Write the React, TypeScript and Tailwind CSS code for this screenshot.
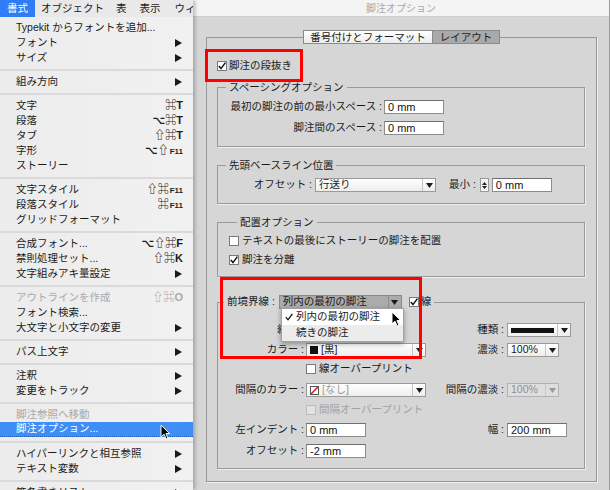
import React from 'react';

type Item = { label: string; sc?: string; fk?: string; sub?: boolean; dis?: boolean; hi?: boolean } | 'sep';

const items: Item[] = [
  { label: 'Typekit からフォントを追加...' },
  { label: 'フォント', sub: true },
  { label: 'サイズ', sub: true },
  'sep',
  { label: '組み方向', sub: true },
  'sep',
  { label: '文字', sc: '⌘T' },
  { label: '段落', sc: '⌥⌘T' },
  { label: 'タブ', sc: '⇧⌘T' },
  { label: '字形', sc: '⌥⇧', fk: 'F11' },
  { label: 'ストーリー' },
  'sep',
  { label: '文字スタイル', sc: '⇧⌘', fk: 'F11' },
  { label: '段落スタイル', sc: '⌘', fk: 'F11' },
  { label: 'グリッドフォーマット' },
  'sep',
  { label: '合成フォント...', sc: '⌥⇧⌘F' },
  { label: '禁則処理セット...', sc: '⇧⌘K' },
  { label: '文字組みアキ量設定', sub: true },
  'sep',
  { label: 'アウトラインを作成', sc: '⇧⌘O', dis: true },
  { label: 'フォント検索...' },
  { label: '大文字と小文字の変更', sub: true },
  'sep',
  { label: 'パス上文字', sub: true },
  'sep',
  { label: '注釈', sub: true },
  { label: '変更をトラック', sub: true },
  'sep',
  { label: '脚注参照へ移動', dis: true },
  { label: '脚注オプション...', hi: true },
  'sep',
  { label: 'ハイパーリンクと相互参照', sub: true },
  { label: 'テキスト変数', sub: true },
  'sep',
  { label: '箇条書きリスト', sub: true },
];

function Arrow({ white }: { white?: boolean }) {
  return (
    <svg width="7" height="8" viewBox="0 0 7 8">
      <path d="M0 0 L7 4 L0 8 Z" fill={white ? '#fff' : '#1a1a1a'} />
    </svg>
  );
}

function Cursor() {
  return (
    <svg width="11" height="16" viewBox="0 0 11 16">
      <path d="M1 1 L1 13 L4 10.2 L6.2 15 L8 14.2 L5.9 9.6 L9.8 9.6 Z" fill="#000" stroke="#fff" strokeWidth="1" strokeLinejoin="round" />
    </svg>
  );
}

function Down({ dis }: { dis?: boolean }) {
  return (
    <svg width="7" height="5" viewBox="0 0 7 5">
      <path d="M0 0 L7 0 L3.5 5 Z" fill={dis ? '#9a9a9a' : '#1a1a1a'} />
    </svg>
  );
}

function Check({ on, dis }: { on?: boolean; dis?: boolean }) {
  return (
    <span
      className={`w-[10px] h-[10px] shrink-0 border flex items-center justify-center ${
        dis ? 'border-[#bcbcbc] bg-[#e2e2e2]' : 'border-[#7a7a7a] bg-white'
      }`}
    >
      {on && (
        <svg width="8" height="8" viewBox="0 0 8 8">
          <path d="M0.8 4 L3 6.6 L7.4 0.6" fill="none" stroke="#111" strokeWidth="1.5" />
        </svg>
      )}
    </span>
  );
}

function Input({ w, value }: { w: string; value: string }) {
  return (
    <div className={`${w} h-[14px] bg-white border border-[#8c8c8c] border-t-[#6f6f6f] pl-[3px] flex items-center text-[11px] leading-[12px] text-[#111]`}>
      {value}
    </div>
  );
}

function Select({ w, children, dis, pressed }: { w: string; children: React.ReactNode; dis?: boolean; pressed?: boolean }) {
  return (
    <div
      className={`${w} h-[14px] flex border ${
        pressed
          ? 'bg-[#ababab] border-[#8a8a8a]'
          : dis
          ? 'bg-[#dedede] border-[#b2b2b2]'
          : 'bg-gradient-to-b from-white to-[#ededed] border-[#9a9a9a]'
      }`}
    >
      <div className="flex-1 flex items-center gap-[3px] px-[3px] overflow-hidden whitespace-nowrap">{children}</div>
      <div className={`w-[13px] flex items-center justify-center border-l ${pressed ? 'border-[#8e8e8e]' : 'border-[#c6c6c6]'}`}>
        <Down dis={dis} />
      </div>
    </div>
  );
}

function Row({ label, left, rlabel, right }: { label: string; left: React.ReactNode; rlabel?: string; right?: React.ReactNode }) {
  return (
    <div className="flex items-center h-[14px]">
      <div className="w-[86px] text-right whitespace-nowrap">{label}</div>
      <div className="w-[120px] ml-[2px]">{left}</div>
      {rlabel && <div className="w-[78px] text-right whitespace-nowrap">{rlabel}</div>}
      {right && <div className="ml-[3px]">{right}</div>}
    </div>
  );
}

export default function App() {
  return (
    <div className="relative w-[610px] h-[490px] overflow-hidden flex font-['Liberation_Sans','Noto_Sans_CJK_JP','DejaVu_Sans',sans-serif] text-[10.5px] text-[#1b1b1b]">
      {/* menu column */}
      <div className="w-[193px] shrink-0 flex flex-col shadow-[2px_0_4px_rgba(0,0,0,0.25)] z-10">
        <div className="h-[17px] shrink-0 bg-[#e9e9e9] flex whitespace-nowrap overflow-hidden">
          <div className="bg-[#2f7df5] text-white px-[7px] h-[17px] flex items-center">書式</div>
          <div className="ml-[6px] h-[17px] flex items-center">オブジェクト</div>
          <div className="ml-[12px] h-[17px] flex items-center">表</div>
          <div className="ml-[13px] h-[17px] flex items-center">表示</div>
          <div className="ml-[14px] h-[17px] flex items-center">ウィンドウ</div>
        </div>
        <div className="flex-1 bg-gradient-to-r from-[#ececec] to-[#f1f1f1] pt-[3px]">
          {items.map((it, i) =>
            it === 'sep' ? (
              <div key={i} className="h-[9px] flex items-center">
                <div className="h-[2px] w-full bg-[#dadada]" />
              </div>
            ) : (
              <div
                key={i}
                className={`h-[15px] flex items-center justify-between pl-[16px] pr-[10px] whitespace-nowrap ${
                  it.hi ? 'bg-[#3f8ef5] text-white border-b border-dotted border-[#1d5fbf]' : it.dis ? 'text-[#a9a9a9]' : ''
                }`}
              >
                <span>{it.label}</span>
                {it.sub && (
                  <span className="mr-[1px]">
                    <Arrow white={it.hi} />
                  </span>
                )}
                {it.sc && (
                  <span className="flex items-baseline text-[11px] font-semibold">
                    {it.sc}
                    {it.fk && <span className="text-[8px] font-bold ml-[1px]">{it.fk}</span>}
                  </span>
                )}
              </div>
            ),
          )}
        </div>
      </div>

      {/* dialog */}
      <div className="flex-1 flex flex-col bg-[#d6d6d6] border-r border-[#9c9c9c]">
        <div className="h-[17px] shrink-0 bg-[#f4f4f4] border-b border-[#cfcfcf] flex items-center justify-center text-[10px] text-[#a9a9a9]">
          脚注オプション
        </div>
        <div className="pl-[13px] pr-[12px] pt-[13px]">
          <div className="relative z-10 flex justify-center">
            <div className="flex h-[14px] border border-[#8a8a8a] leading-[12px]">
              <div className="w-[128px] bg-gradient-to-b from-white to-[#ececec] flex items-center justify-center">番号付けとフォーマット</div>
              <div className="w-[67px] bg-[#a9a9a9] border-l border-[#8a8a8a] flex items-center justify-center">レイアウト</div>
            </div>
          </div>
          <div className="-mt-[7px] h-[445px] border border-[#979797] shadow-[1px_1px_0_#efefef] pl-[10px] pr-[11px] pt-[22px]">
            <div className="flex items-center gap-[2px] h-[12px]">
              <Check on />
              <span>脚注の段抜き</span>
            </div>

            <fieldset className="mt-[8px] border border-[#9a9a9a] shadow-[1px_1px_0_#efefef] pt-[6px] pb-[11px]">
              <legend className="ml-[8px] px-[3px] leading-[14px]">スペーシングオプション</legend>
              <div className="flex items-center h-[14px]">
                <div className="w-[164px] text-right whitespace-nowrap">最初の脚注の前の最小スペース :</div>
                <div className="ml-[2px]"><Input w="w-[60px]" value="0 mm" /></div>
              </div>
              <div className="flex items-center h-[14px] mt-[7px]">
                <div className="w-[164px] text-right whitespace-nowrap">脚注間のスペース :</div>
                <div className="ml-[2px]"><Input w="w-[60px]" value="0 mm" /></div>
              </div>
            </fieldset>

            <fieldset className="mt-[11px] border border-[#9a9a9a] shadow-[1px_1px_0_#efefef] pt-[6px] pb-[11px]">
              <legend className="ml-[8px] px-[3px] leading-[14px]">先頭ベースライン位置</legend>
              <div className="flex items-center h-[14px]">
                <div className="w-[94px] text-right whitespace-nowrap">オフセット :</div>
                <div className="ml-[3px]">
                  <Select w="w-[121px]">行送り</Select>
                </div>
                <div className="ml-[13px] whitespace-nowrap">最小 :</div>
                <div className="ml-[4px] w-[9px] h-[14px] border border-[#9a9a9a] bg-[#f2f2f2] flex flex-col items-center justify-center gap-[1px]">
                  <svg width="5" height="3" viewBox="0 0 5 3"><path d="M0 3 L5 3 L2.5 0 Z" fill="#222" /></svg>
                  <svg width="5" height="3" viewBox="0 0 5 3"><path d="M0 0 L5 0 L2.5 3 Z" fill="#222" /></svg>
                </div>
                <div className="ml-[3px]"><Input w="w-[60px]" value="0 mm" /></div>
              </div>
            </fieldset>

            <fieldset className="mt-[11px] border border-[#9a9a9a] shadow-[1px_1px_0_#efefef] pt-[6px] pb-[10px] pl-[11px]">
              <legend className="ml-[8px] px-[3px] leading-[14px]">配置オプション</legend>
              <div className="flex items-center gap-[3px] h-[12px]">
                <Check />
                <span>テキストの最後にストーリーの脚注を配置</span>
              </div>
              <div className="flex items-center gap-[3px] h-[12px] mt-[7px]">
                <Check on />
                <span>脚注を分離</span>
              </div>
            </fieldset>

            <fieldset className="mt-[18px] border border-[#9a9a9a] shadow-[1px_1px_0_#efefef] pt-[14px] pb-[10px]">
              <legend className="ml-[6px] px-[3px] h-[14px] flex items-center">
                <span className="whitespace-nowrap">前境界線 :</span>
                <div className="ml-[4px]">
                  <Select w="w-[123px]" pressed>列内の最初の脚注</Select>
                </div>
                <div className="ml-[7px] flex items-center gap-[2px]">
                  <Check on />
                  <span>線</span>
                </div>
              </legend>
              <Row
                label="線幅 :"
                left={<Input w="w-[60px]" value="1 pt" />}
                rlabel="種類 :"
                right={
                  <Select w="w-[64px]">
                    <span className="w-[43px] h-[5px] bg-[#111]" />
                  </Select>
                }
              />
              <div className="mt-[6px]">
                <Row
                  label="カラー :"
                  left={
                    <Select w="w-[120px]">
                      <span className="w-[8px] h-[8px] bg-[#111]" />
                      <span>[黒]</span>
                    </Select>
                  }
                  rlabel="濃淡 :"
                  right={<Select w="w-[52px]">100%</Select>}
                />
              </div>
              <div className="flex items-center gap-[3px] h-[12px] mt-[6px] pl-[88px]">
                <Check />
                <span>線オーバープリント</span>
              </div>
              <div className="mt-[8px]">
                <Row
                  label="間隔のカラー :"
                  left={
                    <Select w="w-[120px]">
                      <svg width="9" height="9" viewBox="0 0 9 9">
                        <rect x="0.5" y="0.5" width="8" height="8" fill="#fff" stroke="#555" />
                        <path d="M1 8 L8 1" stroke="#e21a1a" strokeWidth="1.6" />
                      </svg>
                      <span className="text-[#9a9a9a]">[なし]</span>
                    </Select>
                  }
                  rlabel="間隔の濃淡 :"
                  right={
                    <Select w="w-[52px]" dis>
                      <span className="text-[#8f8f8f]">100%</span>
                    </Select>
                  }
                />
              </div>
              <div className="flex items-center gap-[3px] h-[12px] mt-[7px] pl-[88px] text-[#a3a3a3]">
                <Check dis />
                <span>間隔オーバープリント</span>
              </div>
              <div className="mt-[7px]">
                <Row label="左インデント :" left={<Input w="w-[60px]" value="0 mm" />} rlabel="幅 :" right={<Input w="w-[60px]" value="200 mm" />} />
              </div>
              <div className="mt-[7px]">
                <Row label="オフセット :" left={<Input w="w-[60px]" value="-2 mm" />} />
              </div>
            </fieldset>
          </div>
        </div>
      </div>

      {/* popup list of 前境界線 */}
      <div className="absolute left-[281px] top-[308px] w-[123px] z-20 bg-white border border-[#a2a2a2] shadow-[0_2px_5px_rgba(0,0,0,0.35)] text-[#1b1b1b]">
        <div className="h-[16px] flex items-center">
          <span className="w-[14px] flex justify-center">
            <svg width="8" height="8" viewBox="0 0 8 8">
              <path d="M0.8 4.2 L3 6.8 L7.4 0.8" fill="none" stroke="#111" strokeWidth="1.3" />
            </svg>
          </span>
          <span>列内の最初の脚注</span>
        </div>
        <div className="h-[16px] flex items-center bg-[#ececec]">
          <span className="w-[14px]" />
          <span>続きの脚注</span>
        </div>
      </div>

      {/* red annotation frames */}
      <div className="absolute left-[205px] top-[49px] w-[98px] h-[33px] border-[3px] border-[#ff0000] z-30" />
      <div className="absolute left-[220px] top-[277px] w-[202px] h-[82px] border-[3px] border-[#ff0000] z-30" />

      {/* pointers */}
      <div className="absolute left-[160px] top-[424px] z-40">
        <Cursor />
      </div>
      <div className="absolute left-[391px] top-[311px] z-40">
        <Cursor />
      </div>
    </div>
  );
}
